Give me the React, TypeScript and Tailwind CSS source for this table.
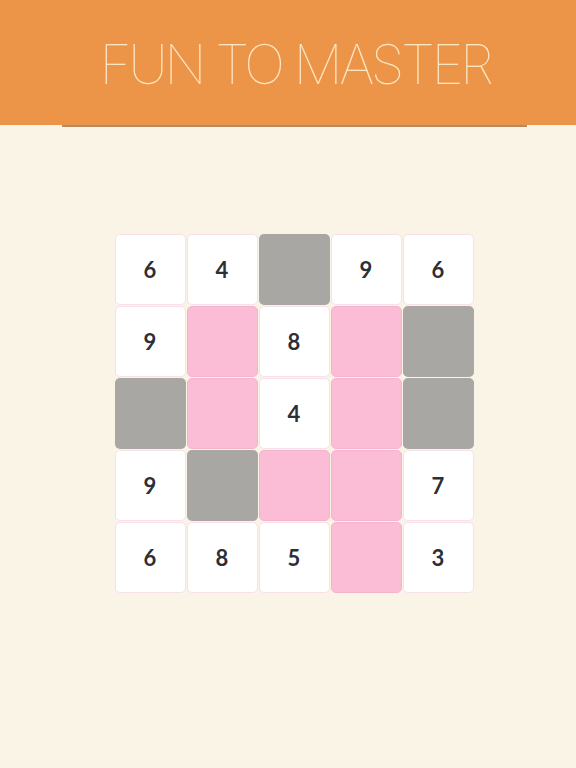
const grid: (number | 'p' | 'g')[][] = [
  [6, 4, 'g', 9, 6],
  [9, 'p', 8, 'p', 'g'],
  ['g', 'p', 4, 'p', 'g'],
  [9, 'g', 'p', 'p', 7],
  [6, 8, 5, 'p', 3],
];

function Cell({ v }: { v: number | 'p' | 'g' }) {
  if (v === 'p') {
    return <div className="h-[71px] w-[71px] rounded-[5px] border border-[#f6b3cc] bg-[#fbbdd5]" />;
  }
  if (v === 'g') {
    return <div className="h-[71px] w-[71px] rounded-[5px] bg-[#a8a7a3]" />;
  }
  return (
    <div className="flex h-[71px] w-[71px] items-center justify-center rounded-[5px] border border-[#f7e1e8] bg-white text-[22px] font-bold text-[#2b2f36]">
      {v}
    </div>
  );
}

export default function App() {
  return (
    <div className="flex h-[768px] w-[576px] flex-col bg-[#faf4e6]" style={{ fontFamily: 'Lato, "Open Sans", sans-serif' }}>
      {/* header */}
      <div className="flex h-[125px] items-center justify-center bg-[#ec9549] pl-[14px]">
        <h1
          className="mt-[4px] text-[55px] font-thin leading-none tracking-[-3.5px] text-[#fde7c3]"
          style={{ fontFamily: 'Inter, Lato, sans-serif' }}
        >
          FUN TO MASTER
        </h1>
      </div>
      <div className="ml-[62px] h-[2px] w-[465px] bg-[#b98a5f]" />

      {/* board */}
      <div className="mt-[107px] flex justify-center pl-[12px]">
        <div className="grid grid-cols-5 gap-[1px]">
          {grid.flat().map((v, i) => (
            <Cell key={i} v={v} />
          ))}
        </div>
      </div>
    </div>
  );
}
